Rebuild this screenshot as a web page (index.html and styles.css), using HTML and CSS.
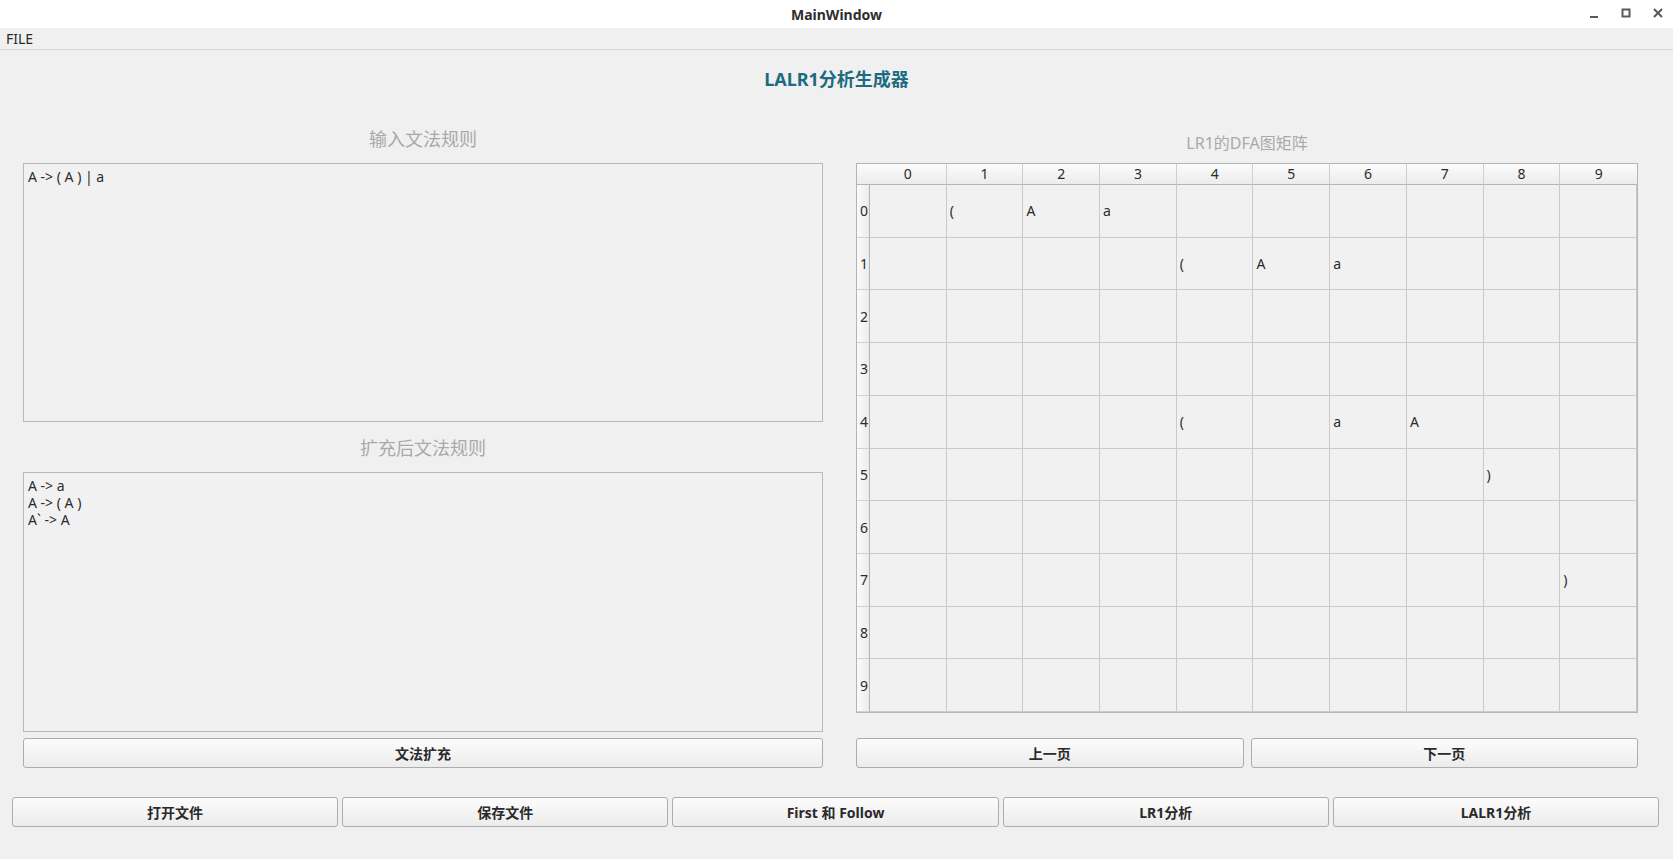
FILE: index.html
```html
<!DOCTYPE html>
<html lang="zh">
<head>
<meta charset="utf-8">
<title>MainWindow</title>
<link rel="stylesheet" href="styles.css">
</head>
<body>
<div class="window">
  <header class="titlebar">
    <span class="wtitle">MainWindow</span>
    <div class="controls">
      <svg class="ctl" width="14" height="14" viewBox="0 0 14 14"><rect x="3" y="10" width="8" height="2" fill="#5a5a5a"/></svg>
      <svg class="ctl" width="14" height="14" viewBox="0 0 14 14"><rect x="3.5" y="3.5" width="7" height="7" fill="none" stroke="#5a5a5a" stroke-width="2"/></svg>
      <svg class="ctl" width="14" height="14" viewBox="0 0 14 14"><path d="M3 3 L11 11 M11 3 L3 11" stroke="#5a5a5a" stroke-width="2"/></svg>
    </div>
  </header>
  <nav class="menubar"><span class="menuitem">FILE</span></nav>
  <main class="central">
    <h1 class="apptitle">LALR1分析生成器</h1>
    <div class="columns">
      <section class="leftcol">
        <div class="label first">输入文法规则</div>
        <div class="textbox">A -&gt; ( A ) | a</div>
        <div class="label second">扩充后文法规则</div>
        <div class="textbox">A -&gt; a<br>A -&gt; ( A )<br>A` -&gt; A</div>
        <button class="btn wide">文法扩充</button>
      </section>
      <section class="rightcol">
        <div class="label rlabel">LR1的DFA图矩阵</div>
        <div class="grid">
          <div class="corner"></div>
          <div class="hh">0</div><div class="hh">1</div><div class="hh">2</div><div class="hh">3</div><div class="hh">4</div><div class="hh">5</div><div class="hh">6</div><div class="hh">7</div><div class="hh">8</div><div class="hh">9</div>

          <div class="vh">0</div>
          <div class="c"></div><div class="c">(</div><div class="c">A</div><div class="c">a</div><div class="c"></div><div class="c"></div><div class="c"></div><div class="c"></div><div class="c"></div><div class="c"></div>

          <div class="vh">1</div>
          <div class="c"></div><div class="c"></div><div class="c"></div><div class="c"></div><div class="c">(</div><div class="c">A</div><div class="c">a</div><div class="c"></div><div class="c"></div><div class="c"></div>

          <div class="vh">2</div>
          <div class="c"></div><div class="c"></div><div class="c"></div><div class="c"></div><div class="c"></div><div class="c"></div><div class="c"></div><div class="c"></div><div class="c"></div><div class="c"></div>

          <div class="vh">3</div>
          <div class="c"></div><div class="c"></div><div class="c"></div><div class="c"></div><div class="c"></div><div class="c"></div><div class="c"></div><div class="c"></div><div class="c"></div><div class="c"></div>

          <div class="vh">4</div>
          <div class="c"></div><div class="c"></div><div class="c"></div><div class="c"></div><div class="c">(</div><div class="c"></div><div class="c">a</div><div class="c">A</div><div class="c"></div><div class="c"></div>

          <div class="vh">5</div>
          <div class="c"></div><div class="c"></div><div class="c"></div><div class="c"></div><div class="c"></div><div class="c"></div><div class="c"></div><div class="c"></div><div class="c">)</div><div class="c"></div>

          <div class="vh">6</div>
          <div class="c"></div><div class="c"></div><div class="c"></div><div class="c"></div><div class="c"></div><div class="c"></div><div class="c"></div><div class="c"></div><div class="c"></div><div class="c"></div>

          <div class="vh">7</div>
          <div class="c"></div><div class="c"></div><div class="c"></div><div class="c"></div><div class="c"></div><div class="c"></div><div class="c"></div><div class="c"></div><div class="c"></div><div class="c">)</div>

          <div class="vh">8</div>
          <div class="c"></div><div class="c"></div><div class="c"></div><div class="c"></div><div class="c"></div><div class="c"></div><div class="c"></div><div class="c"></div><div class="c"></div><div class="c"></div>

          <div class="vh">9</div>
          <div class="c"></div><div class="c"></div><div class="c"></div><div class="c"></div><div class="c"></div><div class="c"></div><div class="c"></div><div class="c"></div><div class="c"></div><div class="c"></div>
        </div>
        <div class="pager">
          <button class="btn">上一页</button>
          <button class="btn">下一页</button>
        </div>
      </section>
    </div>
    <div class="actions">
      <button class="btn">打开文件</button>
      <button class="btn">保存文件</button>
      <button class="btn">First 和 Follow</button>
      <button class="btn">LR1分析</button>
      <button class="btn">LALR1分析</button>
    </div>
  </main>
</div>
</body>
</html>
```
FILE: styles.css
```css
* { box-sizing: border-box; }
html, body {
  margin: 0;
  padding: 0;
  background: #f0f0f0;
}
body {
  font-family: "Noto Sans", "Noto Sans CJK SC", sans-serif;
  font-size: 14px;
  color: #2b2b2b;
  width: 1673px;
  height: 859px;
  overflow: hidden;
}
.window {
  display: flex;
  flex-direction: column;
  height: 859px;
}
.titlebar {
  height: 28px;
  background: #ffffff;
  display: flex;
  align-items: center;
  justify-content: center;
  position: relative;
}
.wtitle {
  font-weight: bold;
  font-size: 14px;
  color: #2e2e2e;
}
.controls {
  position: absolute;
  right: 8px;
  top: 6px;
  display: flex;
  gap: 18px;
}
.menubar {
  height: 22px;
  border-bottom: 1px solid #d6d6d6;
  display: flex;
  align-items: center;
  padding-left: 6px;
}
.menuitem { font-size: 14px; color: #2b2b2b; }
.central {
  display: flex;
  flex-direction: column;
}
.apptitle {
  margin: 0;
  padding-top: 17px;
  height: 76px;
  line-height: 24px;
  text-align: center;
  font-size: 18px;
  font-weight: bold;
  color: #1b6c80;
}
.columns {
  display: flex;
  padding: 0 35px 0 23px;
  gap: 33px;
}
.leftcol {
  width: 800px;
  display: flex;
  flex-direction: column;
}
.rightcol {
  width: 782px;
  display: flex;
  flex-direction: column;
}
.label {
  text-align: center;
  color: #a9a9a9;
  font-size: 18px;
}
.label.first { height: 37px; line-height: 26px; }
.label.second { height: 50px; line-height: 52px; }
.label.rlabel { height: 37px; line-height: 34px; font-size: 16px; }
.textbox {
  height: 259px;
  border: 1px solid #b9b9b9;
  background: #f1f1f1;
  padding: 4px 4px;
  line-height: 17px;
  font-size: 14px;
  color: #2b2b2b;
}
.leftcol .textbox:nth-of-type(4) { height: 260px; }
.btn {
  height: 30px;
  border: 1px solid #adadad;
  border-radius: 3px;
  background: linear-gradient(#fcfcfc, #ececec);
  font-family: inherit;
  font-size: 14px;
  font-weight: bold;
  color: #2a2a2a;
  padding: 0;
}
.btn.wide { margin-top: 6px; }
.grid {
  height: 550px;
  display: grid;
  grid-template-columns: 13px repeat(10, 1fr);
  grid-template-rows: 21px repeat(10, 1fr);
  border: 1px solid #b4b4b4;
  background: #f1f1f1;
}
.corner, .hh {
  background: linear-gradient(#fbfbfb, #ececec);
  border-bottom: 1px solid #b4b4b4;
}
.hh {
  border-right: 1px solid #cfcfcf;
  text-align: center;
  line-height: 20px;
  font-size: 14px;
  color: #2b2b2b;
}
.hh:nth-child(11) { border-right: none; }
.vh {
  background: linear-gradient(90deg, #fbfbfb, #ececec);
  border-right: 1px solid #b4b4b4;
  border-bottom: 1px solid #cfcfcf;
  display: flex;
  align-items: center;
  padding-left: 3px;
  font-size: 14px;
}
.c {
  border-right: 1px solid #cacaca;
  border-bottom: 1px solid #cacaca;
  display: flex;
  align-items: center;
  padding-left: 3px;
  font-size: 14px;
}
.pager {
  display: flex;
  gap: 7px;
  margin-top: 25px;
}
.pager .btn { flex: 1; }
.actions {
  display: flex;
  gap: 4px;
  padding: 0 14px 0 12px;
  margin-top: 29px;
}
.actions .btn { flex: 1; }
```
